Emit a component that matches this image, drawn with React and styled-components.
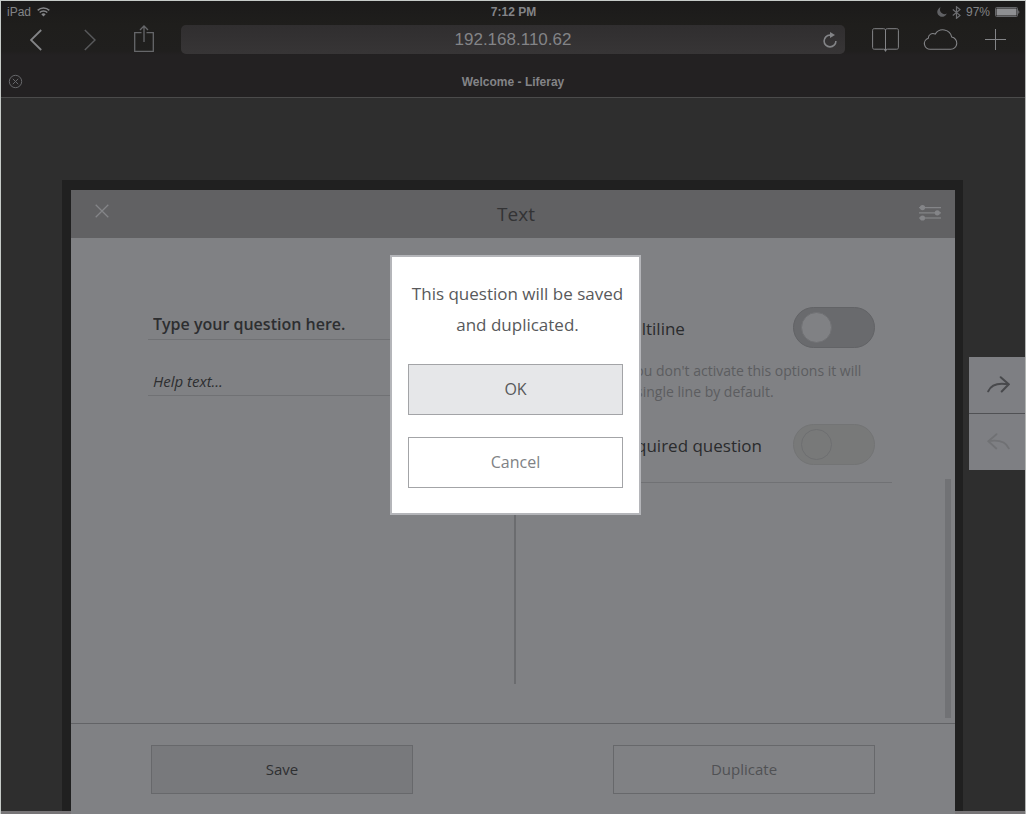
import React from "react";
import styled, { createGlobalStyle } from "styled-components";

const sans = `"Open Sans", "Noto Sans", sans-serif`;
const system = `"Liberation Sans", Arial, sans-serif`;

const GlobalStyle = createGlobalStyle`
  *, *::before, *::after { box-sizing: border-box; }
  body { margin: 0; background: #2e2e2e; }
  button, input { font: inherit; color: inherit; }
  button { border: 0; padding: 0; background: none; cursor: pointer; }
  svg { display: block; }
`;

const Screen = styled.div`
  min-height: 100vh;
  display: flex;
  flex-direction: column;
  border: 1px solid #c6cbc8;
  border-right-color: #b4b6b5;
  border-bottom: 0;
  font-family: ${sans};
`;

/* Browser chrome */

const Chrome = styled.header`
  background: linear-gradient(#1b1a1a 0, #1f1e1c 24px, #201f1e 50px, #232122 54px);
  border-bottom: 1px solid #4b4b4b;
  color: #838487;
  font-family: ${system};
`;

const StatusBar = styled.div`
  height: 24px;
  padding: 0 5px 2px 6px;
  display: grid;
  grid-template-columns: 1fr auto 1fr;
  align-items: center;
  font-size: 12px;
  line-height: 20px;
`;

const StatusGroup = styled.div`
  display: flex;
  align-items: center;
  gap: ${(p) => p.$gap}px;
  justify-content: ${(p) => (p.$end ? "flex-end" : "flex-start")};
`;

const Clock = styled.strong`
  font-weight: 700;
`;

const Toolbar = styled.div`
  height: 29px;
  padding: 0 12px 0 21px;
  display: flex;
  align-items: center;
`;

const ToolGroup = styled.div`
  display: flex;
  align-items: center;
  gap: ${(p) => p.$gap}px;
`;

const ToolButton = styled.button`
  width: ${(p) => p.$width}px;
  height: 29px;
  display: flex;
  align-items: center;
  justify-content: center;
  color: ${(p) => p.$color || "#838487"};
`;

const AddressBar = styled.div`
  flex: 1;
  min-width: 0;
  height: 29px;
  margin: 0 22px 0 23px;
  padding-left: 30px;
  display: flex;
  align-items: center;
  border-radius: 5px;
  background: linear-gradient(#302e2f, #373536);
`;

const AddressInput = styled.input`
  flex: 1;
  min-width: 0;
  height: 29px;
  padding: 0;
  border: 0;
  outline: 0;
  background: none;
  text-align: center;
  font-size: 17px;
`;

const TabBar = styled.div`
  height: 31px;
  margin-top: 12px;
  padding: 0 7px;
  display: grid;
  grid-template-columns: 16px 1fr 16px;
  align-items: center;
`;

const TabTitle = styled.div`
  text-align: center;
  font-size: 12px;
  font-weight: 700;
  line-height: 16px;
`;

const CloseTab = styled.button`
  color: #66676a;
`;

/* Page canvas */

const Canvas = styled.main`
  flex: 1;
  display: flex;
  padding-left: 61px;
  background: linear-gradient(to top, #777577 3px, #2e2e2e 3px);
`;

const Frame = styled.section`
  flex: 1;
  min-width: 0;
  margin-top: 82px;
  padding: 10px 8px 0 9px;
  display: flex;
  background: linear-gradient(to top, #777577 3px, #202020 3px);
`;

const Panel = styled.div`
  position: relative;
  flex: 1;
  min-width: 0;
  display: flex;
  flex-direction: column;
  background: #808184;
`;

const PanelHeader = styled.div`
  height: 48px;
  padding: 0 11px 0 17px;
  display: grid;
  grid-template-columns: 28px 1fr 28px;
  align-items: center;
  background: #616163;
  color: #848588;
`;

const PanelTitle = styled.h1`
  margin: 0;
  text-align: center;
  font-size: 19px;
  font-weight: 400;
  line-height: 24px;
  color: #333335;
`;

const HeaderButton = styled.button`
  height: 42px;
  display: flex;
  align-items: center;
  justify-content: center;
  align-self: start;
`;

const PanelBody = styled.div`
  flex: 1;
  padding-left: 4px;
  display: grid;
  grid-template-columns: minmax(0, 1fr) 2px minmax(0, 1fr);
`;

const QuestionColumn = styled.div`
  padding: 72px 24px 0 73px;
  display: flex;
  flex-direction: column;
  gap: 26px;
`;

const Field = styled.input`
  width: 100%;
  height: 30px;
  padding: ${(p) => (p.$help ? "0 5px" : "0 5px 2px")};
  border: 0;
  border-bottom: 1px solid #707174;
  border-radius: 0;
  outline: 0;
  background: none;
  font-size: ${(p) => (p.$help ? 15 : 16)}px;
  font-style: ${(p) => (p.$help ? "italic" : "normal")};
  font-weight: ${(p) => (p.$help ? 400 : 600)};
  color: #2d2e30;

  &::placeholder {
    color: #2d2e30;
    opacity: 1;
  }
`;

const Divider = styled.div`
  margin: 39px 0;
  background: #6b6c6f;
`;

const SettingsColumn = styled.div`
  display: flex;
`;

const Settings = styled.div`
  flex: 1;
  min-width: 0;
  padding: 69px 53px 0 94px;
`;

const SettingGroup = styled.div`
  padding: 0 17px 17px 6px;
  border-bottom: 1px solid #707174;
`;

const SettingRow = styled.div`
  display: flex;
  align-items: center;
  justify-content: space-between;
`;

const SettingLabel = styled.label`
  padding-top: 3px;
  font-size: 17px;
  line-height: 24px;
  color: #2a2b2d;
`;

const SettingHint = styled.p`
  margin: 12px 0 22px;
  font-size: 14px;
  line-height: 21px;
  color: #5c5d60;
`;

const Toggle = styled.input`
  appearance: none;
  flex: none;
  width: 82px;
  height: 41px;
  margin: 0;
  padding: 4px 7px;
  border: 1px solid #626366;
  border-radius: 21px;
  background: #696a6d;

  &::before {
    content: "";
    display: block;
    width: 31px;
    height: 31px;
    border: 1px solid #707174;
    border-radius: 50%;
    background: #808184;
  }

  &:disabled {
    border-color: #737475;
    background: #787979;
  }

  &:disabled::before {
    border-color: #6e6f71;
    background: #787979;
  }
`;

const ScrollThumb = styled.div`
  width: 6px;
  height: 239px;
  margin: 0 4px 5px 0;
  align-self: flex-end;
  background: #717275;
`;

const PanelFooter = styled.div`
  height: 91px;
  padding: 21px 80px;
  display: flex;
  align-items: flex-start;
  justify-content: space-between;
  border-top: 1px solid #626366;
`;

const FooterButton = styled.button`
  width: 262px;
  height: 49px;
  padding-bottom: 2px;
  border: 1px solid #67686b;
  background: ${(p) => (p.$primary ? "#78797c" : "transparent")};
  color: ${(p) => (p.$primary ? "#2f3032" : "#505154")};
  font-size: 15px;
  line-height: 24px;
`;

/* Confirmation dialog */

const Overlay = styled.div`
  position: absolute;
  inset: 0;
  padding: 65px 0 0 5px;
  display: flex;
  align-items: flex-start;
  justify-content: center;
`;

const Dialog = styled.div`
  width: 251px;
  padding: 21px 16px 25px;
  display: flex;
  flex-direction: column;
  border: 2px solid #b4b5b9;
  background: #ffffff;
`;

const DialogText = styled.p`
  margin: 0 -4px 24px 0;
  text-align: center;
  font-size: 17px;
  line-height: 31px;
  color: #58595b;
`;

const DialogActions = styled.div`
  display: flex;
  flex-direction: column;
  gap: 22px;
`;

const DialogButton = styled.button`
  height: 51px;
  padding-bottom: 2px;
  border: 1px solid #a3a4a7;
  background: ${(p) => (p.$primary ? "#e6e7e9" : "#ffffff")};
  color: ${(p) => (p.$primary ? "#58595b" : "#808285")};
  font-size: 16px;
  line-height: 24px;
`;

/* Undo and redo rail */

const HistoryRail = styled.nav`
  width: 62px;
  padding: 259px 0 0 6px;
  display: flex;
  flex-direction: column;
`;

const HistoryButton = styled.button`
  height: ${(p) => (p.$first ? 57 : 56)}px;
  padding: 0 2px 2px 4px;
  display: flex;
  align-items: center;
  justify-content: center;
  border-bottom: ${(p) => (p.$first ? "1px solid #505154" : "0")};
  background: #7e7f83;
  color: ${(p) => (p.$first ? "#48494c" : "#707174")};
`;

const WifiIcon = () => (
  <svg width="13" height="10" viewBox="0 0 13 10" fill="none" stroke="currentColor" strokeWidth="1.5">
    <path d="M.7 3.4a8.2 8.2 0 0 1 11.6 0M2.7 5.5a5.4 5.4 0 0 1 7.6 0" />
    <path d="M6.5 9.5 4.3 7.2a3.2 3.2 0 0 1 4.4 0z" fill="currentColor" stroke="none" />
  </svg>
);

const MoonIcon = () => (
  <svg width="10" height="10" viewBox="0 0 10 10" fill="#606164">
    <path d="M3.6.3A4.9 4.9 0 1 0 9.8 6.6 4.6 4.6 0 0 1 3.600.3z" />
  </svg>
);

const BluetoothIcon = () => (
  <svg width="9" height="13" viewBox="0 0 9 13" fill="none" stroke="#6d6e71" strokeWidth="1.2">
    <path d="M.8 3.500 8 9.400 4.500 12.300V.8L8 3.600.8 9.500" />
  </svg>
);

const BatteryIcon = () => (
  <svg width="25" height="10" viewBox="0 0 25 10">
    <rect x=".5" y=".5" width="22" height="9" rx="1" fill="none" stroke="#66676a" />
    <path d="M1.500 1.500h20v7h-20z" fill="#8e8f92" />
    <path d="M23.300 3.200c1.400.5 1.400 3.100 0 3.600z" fill="#77787b" />
  </svg>
);

const ChevronIcon = ({ right }) => (
  <svg width="12" height="22" viewBox="0 0 12 22" fill="none" stroke="currentColor" strokeWidth={right ? 1.5 : 1.8}>
    <path d={right ? "M.8 1 11 11 .8 21" : "M11.2 1 1 11l10.2 10"} />
  </svg>
);

const ShareIcon = () => (
  <svg width="20" height="29" viewBox="0 0 20 29" fill="none" stroke="currentColor" strokeWidth="1.300">
    <path d="M7.500 7.700H.7v18.600h18.600V7.700h-6.800M10 17V1M6 5l4-4 4 4" />
  </svg>
);

const ReloadIcon = () => (
  <svg width="14" height="16" viewBox="0 0 14 16" fill="none" stroke="currentColor" strokeWidth="1.600">
    <path d="M8 3.100H7a5.900 5.900 0 1 0 5.900 5.900" />
    <path d="M7 0v6l5-3z" fill="currentColor" stroke="none" />
  </svg>
);

const BookIcon = () => (
  <svg width="27" height="25" viewBox="0 0 27 25" fill="none" stroke="currentColor">
    <path d="M13.500 3.500C13.500 2.200 12.700 1.700 11.500 1.700H2.300C1.200 1.700.600 2.200.600 3.300V20.600c0 1 .6 1.600 1.700 1.600h9.200c1.300 0 2 .5 2 1.500 0-1 .7-1.500 2-1.500h9.200c1.100 0 1.700-.6 1.700-1.600V3.300c0-1.100-.6-1.600-1.700-1.600h-9.200c-1.300 0-2 .5-2 1.800z" />
    <path d="M13.500 3v20" />
    <path d="M11.800 22.300h3.400l-1.700 2.700z" fill="currentColor" stroke="none" />
  </svg>
);

const CloudIcon = () => (
  <svg width="36" height="24" viewBox="0 0 36 24" fill="none" stroke="currentColor" strokeWidth="1.100">
    <path d="M8.500 21.300h20.200a6.200 6.200 0 0 0 1-12.300A9 9 0 0 0 13.200 6.100a4.600 4.600 0 0 0-6.900 4.100A5.700 5.700 0 0 0 8.500 21.300z" />
  </svg>
);

const PlusIcon = () => (
  <svg width="21" height="21" viewBox="0 0 21 21" fill="none" stroke="currentColor">
    <path d="M10.500 0v21M0 10.500h21" />
  </svg>
);

const CircledCrossIcon = () => (
  <svg width="15" height="15" viewBox="0 0 15 15" fill="none" stroke="currentColor">
    <circle cx="7.500" cy="7.500" r="6.200" />
    <path d="m4.800 4.800 5.400 5.400m0-5.400-5.400 5.400" />
  </svg>
);

const CrossIcon = () => (
  <svg width="14" height="14" viewBox="0 0 14 14" fill="none" stroke="currentColor" strokeWidth="1.300">
    <path d="m.7.7 12.600 12.600m0-12.600L.7 13.300" />
  </svg>
);

const SlidersIcon = () => (
  <svg width="22" height="20" viewBox="0 -4 22 20" fill="currentColor">
    <path d="M0 2h22v1.200H0zM0 7.200h22v1.200H0z" />
    <path d="M0 12h22v2H0z" opacity=".6" />
    <circle cx="3.500" cy="2.600" r="2.600" />
    <circle cx="18.300" cy="7.800" r="2.600" />
    <circle cx="3.500" cy="13" r="2.600" />
  </svg>
);

const RedoIcon = () => (
  <svg width="23" height="17" viewBox="0 0 23 17" fill="none" stroke="currentColor" strokeWidth="2" strokeLinecap="round">
    <path d="M1.200 15.300C3.500 10 9.500 6.200 21.500 8.300M13.700 1.200l8 7.100-7 7.200" />
  </svg>
);

const UndoIcon = () => (
  <svg width="23" height="17" viewBox="0 0 23 17" fill="none" stroke="currentColor" strokeWidth="1.800" strokeLinecap="round">
    <path d="M21.800 15.300C19.500 10.200 13.500 6.300 1.300 8.200M9.500 1.200l-8.200 7 8 7.300" />
  </svg>
);

export default function App() {
  return (
    <Screen>
      <GlobalStyle />
      <Chrome>
        <StatusBar>
          <StatusGroup $gap={6}>
            iPad
            <WifiIcon />
          </StatusGroup>
          <Clock>7:12 PM</Clock>
          <StatusGroup $gap={5} $end>
            <MoonIcon />
            <BluetoothIcon />
            97%
            <BatteryIcon />
          </StatusGroup>
        </StatusBar>
        <Toolbar>
          <ToolGroup $gap={26}>
            <ToolButton $width={28} aria-label="Back"><ChevronIcon /></ToolButton>
            <ToolButton $width={28} $color="#58595b" aria-label="Forward"><ChevronIcon right /></ToolButton>
            <ToolButton $width={28} $color="#66676a" aria-label="Share"><ShareIcon /></ToolButton>
          </ToolGroup>
          <AddressBar>
            <AddressInput aria-label="Address" defaultValue="192.168.110.62" />
            <ToolButton $width={30} aria-label="Reload"><ReloadIcon /></ToolButton>
          </AddressBar>
          <ToolGroup $gap={19}>
            <ToolButton $width={36} aria-label="Bookmarks"><BookIcon /></ToolButton>
            <ToolButton $width={36} aria-label="Cloud tabs"><CloudIcon /></ToolButton>
            <ToolButton $width={36} aria-label="New tab"><PlusIcon /></ToolButton>
          </ToolGroup>
        </Toolbar>
        <TabBar>
          <CloseTab aria-label="Close tab"><CircledCrossIcon /></CloseTab>
          <TabTitle>Welcome - Liferay</TabTitle>
        </TabBar>
      </Chrome>

      <Canvas>
        <Frame>
          <Panel>
            <PanelHeader>
              <HeaderButton aria-label="Close"><CrossIcon /></HeaderButton>
              <PanelTitle>Text</PanelTitle>
              <HeaderButton aria-label="Settings"><SlidersIcon /></HeaderButton>
            </PanelHeader>
            <PanelBody>
              <QuestionColumn>
                <Field aria-label="Question" placeholder="Type your question here." />
                <Field $help aria-label="Help text" placeholder="Help text..." />
              </QuestionColumn>
              <Divider />
              <SettingsColumn>
                <Settings>
                  <SettingGroup>
                    <SettingRow>
                      <SettingLabel htmlFor="multiline">Multiline</SettingLabel>
                      <Toggle type="checkbox" id="multiline" />
                    </SettingRow>
                    <SettingHint>
                      If you don't activate this options it will be single line by default.
                    </SettingHint>
                    <SettingRow>
                      <SettingLabel htmlFor="required">Required question</SettingLabel>
                      <Toggle type="checkbox" id="required" disabled />
                    </SettingRow>
                  </SettingGroup>
                </Settings>
                <ScrollThumb />
              </SettingsColumn>
            </PanelBody>
            <PanelFooter>
              <FooterButton $primary>Save</FooterButton>
              <FooterButton>Duplicate</FooterButton>
            </PanelFooter>
            <Overlay>
              <Dialog role="dialog" aria-modal="true" aria-labelledby="dialog-text">
                <DialogText id="dialog-text">This question will be saved and duplicated.</DialogText>
                <DialogActions>
                  <DialogButton $primary>OK</DialogButton>
                  <DialogButton>Cancel</DialogButton>
                </DialogActions>
              </Dialog>
            </Overlay>
          </Panel>
        </Frame>
        <HistoryRail aria-label="History">
          <HistoryButton $first aria-label="Redo"><RedoIcon /></HistoryButton>
          <HistoryButton aria-label="Undo"><UndoIcon /></HistoryButton>
        </HistoryRail>
      </Canvas>
    </Screen>
  );
}
